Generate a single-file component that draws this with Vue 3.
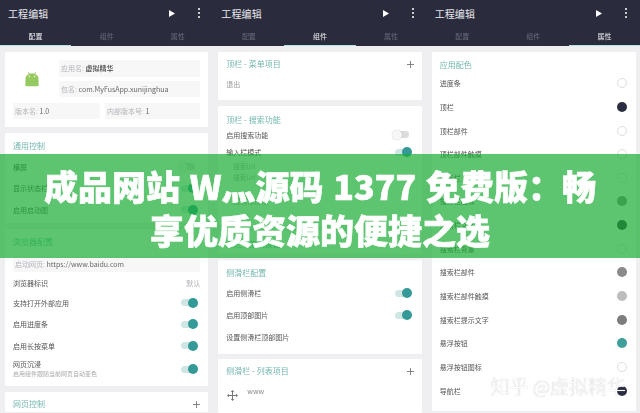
<template>
  <div class="page">
    <div class="screens">
      <!-- 配置 -->
      <section class="phone">
        <AppBar :active="0" />
        <div class="body">
          <div class="card info">
            <div class="info-top">
              <div class="logo">
                <svg width="16" height="16" viewBox="0 0 17 17">
                  <path d="M4.6 1 L5.8 3.8 M12.4 1 L11.2 3.8" stroke="#96c95f" stroke-width="0.9" fill="none" />
                  <path d="M1.5 8.6 C1.5 4.6 4.6 2.6 8.5 2.6 C12.4 2.6 15.5 4.6 15.5 8.6 Z" fill="#96c95f" />
                  <rect x="1.5" y="8.6" width="14" height="7.6" rx="1" fill="#96c95f" />
                  <circle cx="5.8" cy="5.6" r="0.8" fill="#fff" />
                  <circle cx="11.2" cy="5.6" r="0.8" fill="#fff" />
                </svg>
              </div>
              <div class="info-fields">
                <div class="field tall"><span class="muted">应用名: </span><b>虚拟精华</b></div>
                <div class="field"><span class="muted">包名: </span>com.MyFusApp.xunijinghua</div>
              </div>
            </div>
            <div class="info-bottom">
              <div class="field version"><span class="muted">版本名: </span>1.0</div>
              <div class="field"><span class="muted">内部版本号: </span>1</div>
            </div>
          </div>

          <div class="card end-3">
            <h3>通用控制</h3>
            <div v-for="row in generalRows" :key="row" class="row"><span>{{ row }}</span><i class="toggle" :class="{ off: row === '横屏' }"></i></div>
          </div>

          <div class="card end-5">
            <h3>浏览器配置</h3>
            <div class="field url"><span class="muted">启动网页: </span>https://www.baidu.com</div>
            <div class="row first"><span>浏览器标识</span><span class="muted">默认</span></div>
            <div v-for="row in browserRows" :key="row" class="row"><span>{{ row }}</span><i class="toggle"></i></div>
            <div class="row double">
              <div>
                <div>网页沉浸</div>
                <div class="sub">启用组件跟随当前网页自动变色</div>
              </div>
              <i class="toggle"></i>
            </div>
          </div>

          <div class="card">
            <h3 class="with-add">网页控制<Plus /></h3>
          </div>
        </div>
      </section>

      <!-- 组件 -->
      <section class="phone">
        <AppBar :active="1" />
        <div class="body">
          <div class="card menu">
            <h3 class="with-add">顶栏 - 菜单项目<Plus /></h3>
            <div class="row plain muted-row"><span>退出</span></div>
          </div>

          <div class="card search">
            <h3>顶栏 - 搜索功能</h3>
            <div class="row short"><span>启用搜索功能</span><i class="toggle off"></i></div>
            <div class="row short"><span>输入栏模式</span><i class="toggle"></i></div>
            <div class="url-line">搜索Url</div>
            <div class="url-line">搜索Url</div>
            <div class="hint-line">搜索框提示</div>
          </div>

          <div class="card tools">
            <h3>顶栏 - 工具按钮</h3>
          </div>

          <div class="card end-6">
            <h3>侧滑栏配置</h3>
            <div class="row"><span>启用侧滑栏</span><i class="toggle"></i></div>
            <div class="row"><span>启用顶部图片</span><i class="toggle"></i></div>
            <div class="row"><span>设置侧滑栏顶部图片</span></div>
          </div>

          <div class="card grow">
            <h3 class="with-add">侧滑栏 - 列表项目<Plus /></h3>
            <div class="list-item">
              <svg width="11" height="11" viewBox="0 0 11 11" fill="#777">
                <path d="M5.5 0 L7.2 2 H6 V5 H9 V3.8 L11 5.5 L9 7.2 V6 H6 V9 H7.2 L5.5 11 L3.8 9 H5 V6 H2 V7.2 L0 5.5 L2 3.8 V5 H5 V2 H3.8 Z" />
              </svg>
              <span>www</span>
            </div>
          </div>
        </div>
      </section>

      <!-- 属性 -->
      <section class="phone">
        <AppBar :active="2" />
        <div class="body">
          <div class="card colors">
            <h3>应用配色</h3>
            <div v-for="c in colorRows" :key="c.name" class="row color-row">
              <span>{{ c.name }}</span>
              <i class="dot" :class="{ hollow: !c.color }" :style="c.color ? { background: c.color } : null"></i>
            </div>
          </div>
        </div>
      </section>
    </div>

    <div class="banner">成品网站 W灬源码 1377 免费版：畅享优质资源的便捷之选</div>
    <div class="mark">知乎 @虚拟精华</div>
  </div>
</template>

<script setup>
import { h } from 'vue'

const tabs = ['配置', '组件', '属性']

// small bar shared by the three screens
const AppBar = (props) =>
  h('header', { class: 'bar' }, [
    h('div', { class: 'bar-top' }, [
      h('span', { class: 'bar-title' }, '工程编辑'),
      h('svg', { class: 'play', width: 6, height: 7, viewBox: '0 0 6 7' }, [h('path', { d: 'M0 0 L6 3.5 L0 7 Z', fill: '#fff' })]),
      h('span', { class: 'kebab' }, [h('i'), h('i'), h('i')])
    ]),
    h('div', { class: 'tabs' }, tabs.map((t, i) => h('span', { class: i === props.active ? 'tab active' : 'tab' }, t)))
  ])
AppBar.props = ['active']

const Plus = () =>
  h('svg', { class: 'plus', width: 7, height: 7, viewBox: '0 0 7 7' }, [
    h('path', { d: 'M3.5 0 V7 M0 3.5 H7', stroke: '#777', 'stroke-width': 0.9 })
  ])

const generalRows = ['横屏', '显示状态栏', '启用启动图']
const browserRows = ['支持打开外部应用', '启用进度条', '启用长按菜单']

const colorRows = [
  { name: '进度条' },
  { name: '顶栏', color: '#2b2d42' },
  { name: '顶栏部件' },
  { name: '顶栏部件触摸' },
  { name: '搜索栏' },
  { name: '搜索栏图标', color: '#868686' },
  { name: '搜索栏文字', color: '#2b2d42' },
  { name: '搜索栏背景' },
  { name: '搜索栏部件', color: '#8a8a8a' },
  { name: '搜索栏部件触摸', color: '#bdbdbd' },
  { name: '搜索栏提示文字', color: '#7d7d7d' },
  { name: '悬浮按钮', color: '#3f9f9b' },
  { name: '悬浮按钮图标' },
  { name: '导航栏', color: '#2b2d42' }
]
</script>

<style>
html, body {
  margin: 0;
  background: #efeff1;
}
</style>

<style scoped>
.page {
  position: relative;
  width: 640px;
  height: 413px;
  overflow: hidden;
  background: #efeff1;
  font-family: "Noto Sans CJK SC", "Noto Sans", sans-serif;
}

.screens {
  display: grid;
  grid-template-columns: repeat(3, 1fr);
  height: 100%;
  filter: blur(0.55px);
}

.phone {
  display: flex;
  flex-direction: column;
  min-width: 0;
  overflow: hidden;
}

.phone :deep(.bar) {
  height: 46px;
  background: #2a2c3e;
  box-sizing: border-box;
}

.phone :deep(.bar-top) {
  display: flex;
  align-items: center;
  height: 26px;
  padding: 0 13px 0 8px;
}

.phone :deep(.bar-title) {
  flex: 1;
  color: #e8e8ec;
  font-size: 10px;
  letter-spacing: 0.1px;
}

.phone :deep(.play) {
  margin-right: 23px;
}

.phone :deep(.kebab) {
  display: flex;
  flex-direction: column;
  gap: 1.6px;
}

.phone :deep(.kebab i) {
  display: block;
  width: 2px;
  height: 2px;
  border-radius: 50%;
  background: #fff;
}

.phone :deep(.tabs) {
  display: grid;
  grid-template-columns: repeat(3, 1fr);
  height: 20px;
}

.phone :deep(.tab) {
  text-align: center;
  color: #686a79;
  font-size: 7px;
  line-height: 21px;
}

.phone :deep(.tab.active) {
  color: #eef0f0;
  border-bottom: 1.5px solid #b7e4e2;
  box-sizing: border-box;
  height: 20px;
}

.body {
  flex: 1;
  display: flex;
  flex-direction: column;
  gap: 6px;
  padding: 6px 5px 0;
  min-height: 0;
}

.card {
  background: #fff;
  padding: 6px 8px 0;
  border-radius: 1px;
  color: #555;
  font-size: 7px;
  flex-shrink: 0;
  box-shadow: 0 0 1px rgba(0, 0, 0, 0.04);
}

.card h3 {
  display: flex;
  justify-content: space-between;
  align-items: center;
  margin: 0;
  height: 14px;
  font-size: 8px;
  font-weight: 400;
  color: #74b7b1;
  line-height: 14px;
}

.card h3.with-add {
  margin-top: -1px;
  margin-bottom: 1px;
}

.row {
  display: flex;
  justify-content: space-between;
  align-items: center;
  height: 21.5px;
}

.row.first {
  height: 19px;
  margin-top: 1px;
}

.row.double {
  height: 25px;
  line-height: 10px;
}

.row.short {
  height: 17.5px;
}

.row.plain {
  height: 24px;
}

.muted-row {
  color: #999;
}

.muted {
  color: #b4b4ba;
}

.sub {
  color: #aaa;
  font-size: 6px;
}

.field {
  flex: 1;
  box-sizing: border-box;
  height: 16px;
  line-height: 16px;
  padding: 0 2px;
  background: #f7f7f8;
  color: #666;
  font-size: 7px;
  white-space: nowrap;
}

.field b {
  font-weight: 500;
  color: #444;
}

.field.tall {
  flex: none;
  height: 17px;
  line-height: 17px;
}

.field.url {
  margin-top: 7px;
}

.field.version {
  flex: none;
  width: 87px;
}

.info {
  padding: 8px 8px 8px 8px;
  height: 75px;
  box-sizing: border-box;
}

.info-top {
  display: flex;
}

.logo {
  display: flex;
  align-items: center;
  justify-content: center;
  width: 35px;
  margin-right: 10px;
  padding-left: 1px;
}

.info-fields {
  flex: 1;
  display: flex;
  flex-direction: column;
  gap: 4px;
}

.info-fields .field {
  flex: none;
}

.info-bottom {
  display: flex;
  gap: 5px;
  margin-top: 6px;
}

.end-3 {
  height: 90px;
  box-sizing: border-box;
}

.end-3 h3 {
  margin-bottom: 3px;
}

.end-5 {
  height: 157px;
  box-sizing: border-box;
}

.end-6 {
  height: 94px;
  box-sizing: border-box;
}

.card.end-6 h3 {
  margin-bottom: 2px;
}

.end-6 .row {
  height: 22px;
}

.menu {
  height: 48px;
  box-sizing: border-box;
}

.search {
  height: 119px;
  box-sizing: border-box;
}

.search h3 {
  margin-top: 1px;
  margin-bottom: -1px;
}

.tools {
  height: 23px;
  box-sizing: border-box;
}

.grow {
  flex: 1;
  margin-top: -1px;
}

.url-line {
  padding-left: 7px;
  color: #aaa;
  font-size: 6.5px;
  line-height: 10.5px;
}

.hint-line {
  padding-left: 7px;
  margin-top: 14px;
  color: #aaa;
  font-size: 7px;
  line-height: 10px;
}

.toggle {
  position: relative;
  display: block;
  width: 15px;
  height: 7px;
  border-radius: 4px;
  background: #cfe6e5;
  margin-right: 4px;
}

.toggle::after {
  content: "";
  position: absolute;
  right: -2px;
  top: -1.5px;
  width: 10px;
  height: 10px;
  border-radius: 50%;
  background: #339a97;
}

.toggle.off {
  background: #dcdcdc;
  margin-right: 5px;
}

.toggle.off::after {
  right: auto;
  left: -2px;
  background: #f6f6f6;
  box-shadow: 0 0 1px rgba(0, 0, 0, 0.25);
}

.list-item {
  display: flex;
  align-items: flex-start;
  gap: 9px;
  margin-top: 9px;
  padding-left: 1px;
  color: #888;
  font-size: 7px;
  line-height: 8px;
}

.list-item svg {
  margin-top: 3px;
}

.colors {
  height: 359px;
  box-sizing: border-box;
  padding-right: 9px;
  padding-left: 3px;
  margin-right: -1px;
}

.colors h3,
.colors .row {
  margin-left: 5px;
}

.colors h3 {
  margin-bottom: -0.6px;
}

.color-row {
  height: 23.65px;
}

.dot {
  display: block;
  box-sizing: border-box;
  width: 10px;
  height: 10px;
  border-radius: 50%;
}

.dot.hollow {
  background: #fff;
  border: 1px solid #dedede;
}

.banner {
  position: absolute;
  left: 0;
  right: 0;
  top: 154px;
  height: 104px;
  box-sizing: border-box;
  padding: 10px 40px 0;
  background: rgba(27, 173, 54, 0.71);
  color: #fff;
  font-size: 34px;
  font-weight: 900;
  line-height: 44px;
  word-spacing: 2px;
  text-align: center;
  -webkit-text-stroke: 0.6px #fff;
  filter: blur(0.3px);
}

.mark {
  position: absolute;
  right: 14px;
  bottom: 15px;
  color: #fff;
  font-size: 19px;
  font-weight: 300;
  line-height: 24px;
  white-space: nowrap;
  text-shadow: 0 0 1px #aaa;
}
</style>
